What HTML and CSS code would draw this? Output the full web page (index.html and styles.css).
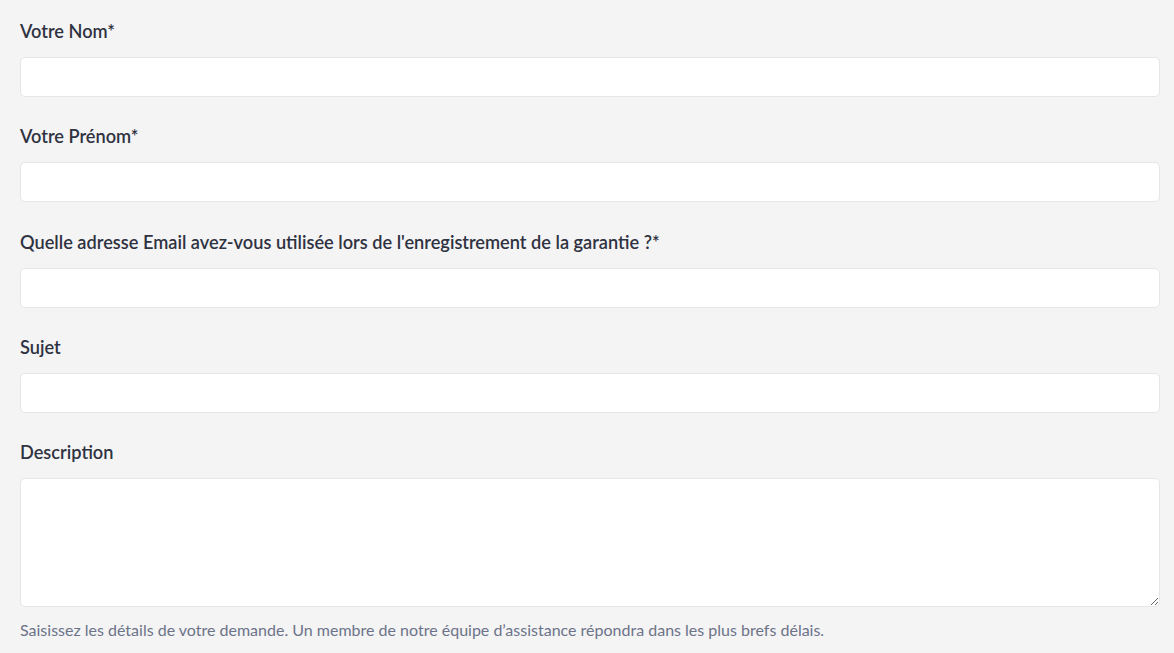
FILE: index.html
```html
<!doctype html>
<html lang="fr">
  <head>
    <meta charset="UTF-8" />
    <meta name="viewport" content="width=device-width, initial-scale=1.0" />
    <title>Soumettre une demande</title>
    <link rel="stylesheet" href="styles.css">
  </head>
  <body>
    <form class="request-form">
      <div class="field">
        <label for="nom">Votre Nom*</label>
        <input type="text" id="nom" />
      </div>

      <div class="field">
        <label for="prenom">Votre Prénom*</label>
        <input type="text" id="prenom" />
      </div>

      <div class="field">
        <label for="email">Quelle adresse Email avez-vous utilisée lors de l'enregistrement de la garantie ?*</label>
        <input type="email" id="email" />
      </div>

      <div class="field">
        <label for="sujet">Sujet</label>
        <input type="text" id="sujet" />
      </div>

      <div class="field">
        <label for="description">Description</label>
        <textarea id="description"></textarea>
        <p class="hint">Saisissez les détails de votre demande. Un membre de notre équipe d’assistance répondra dans les plus brefs délais.</p>
      </div>
    </form>
  </body>
</html>
```

FILE: styles.css
```css
body {
  margin: 0;
  background: #f4f4f4;
  font-family: Lato, "Open Sans", sans-serif;
  color: #2f3241;
}
.request-form {
  padding: 18px 14px 0 20px;
}
.field {
  display: flex;
  flex-direction: column;
  margin-bottom: 26.3px;
}
label {
  font-size: 18.2px;
  font-weight: 600;
  line-height: 26px;
  margin-bottom: 13px;
}
input,
textarea {
  box-sizing: border-box;
  width: 100%;
  height: 40px;
  background: #fff;
  border: 1px solid #e6e6e6;
  border-radius: 5px;
  font-family: inherit;
  font-size: 15px;
  padding: 8px 10px;
  margin: 0;
}
textarea {
  height: 129px;
  resize: vertical;
  display: block;
}
.hint {
  margin: 12px 0 0;
  font-size: 16px;
  line-height: 21px;
  color: #6c7389;
}
```
